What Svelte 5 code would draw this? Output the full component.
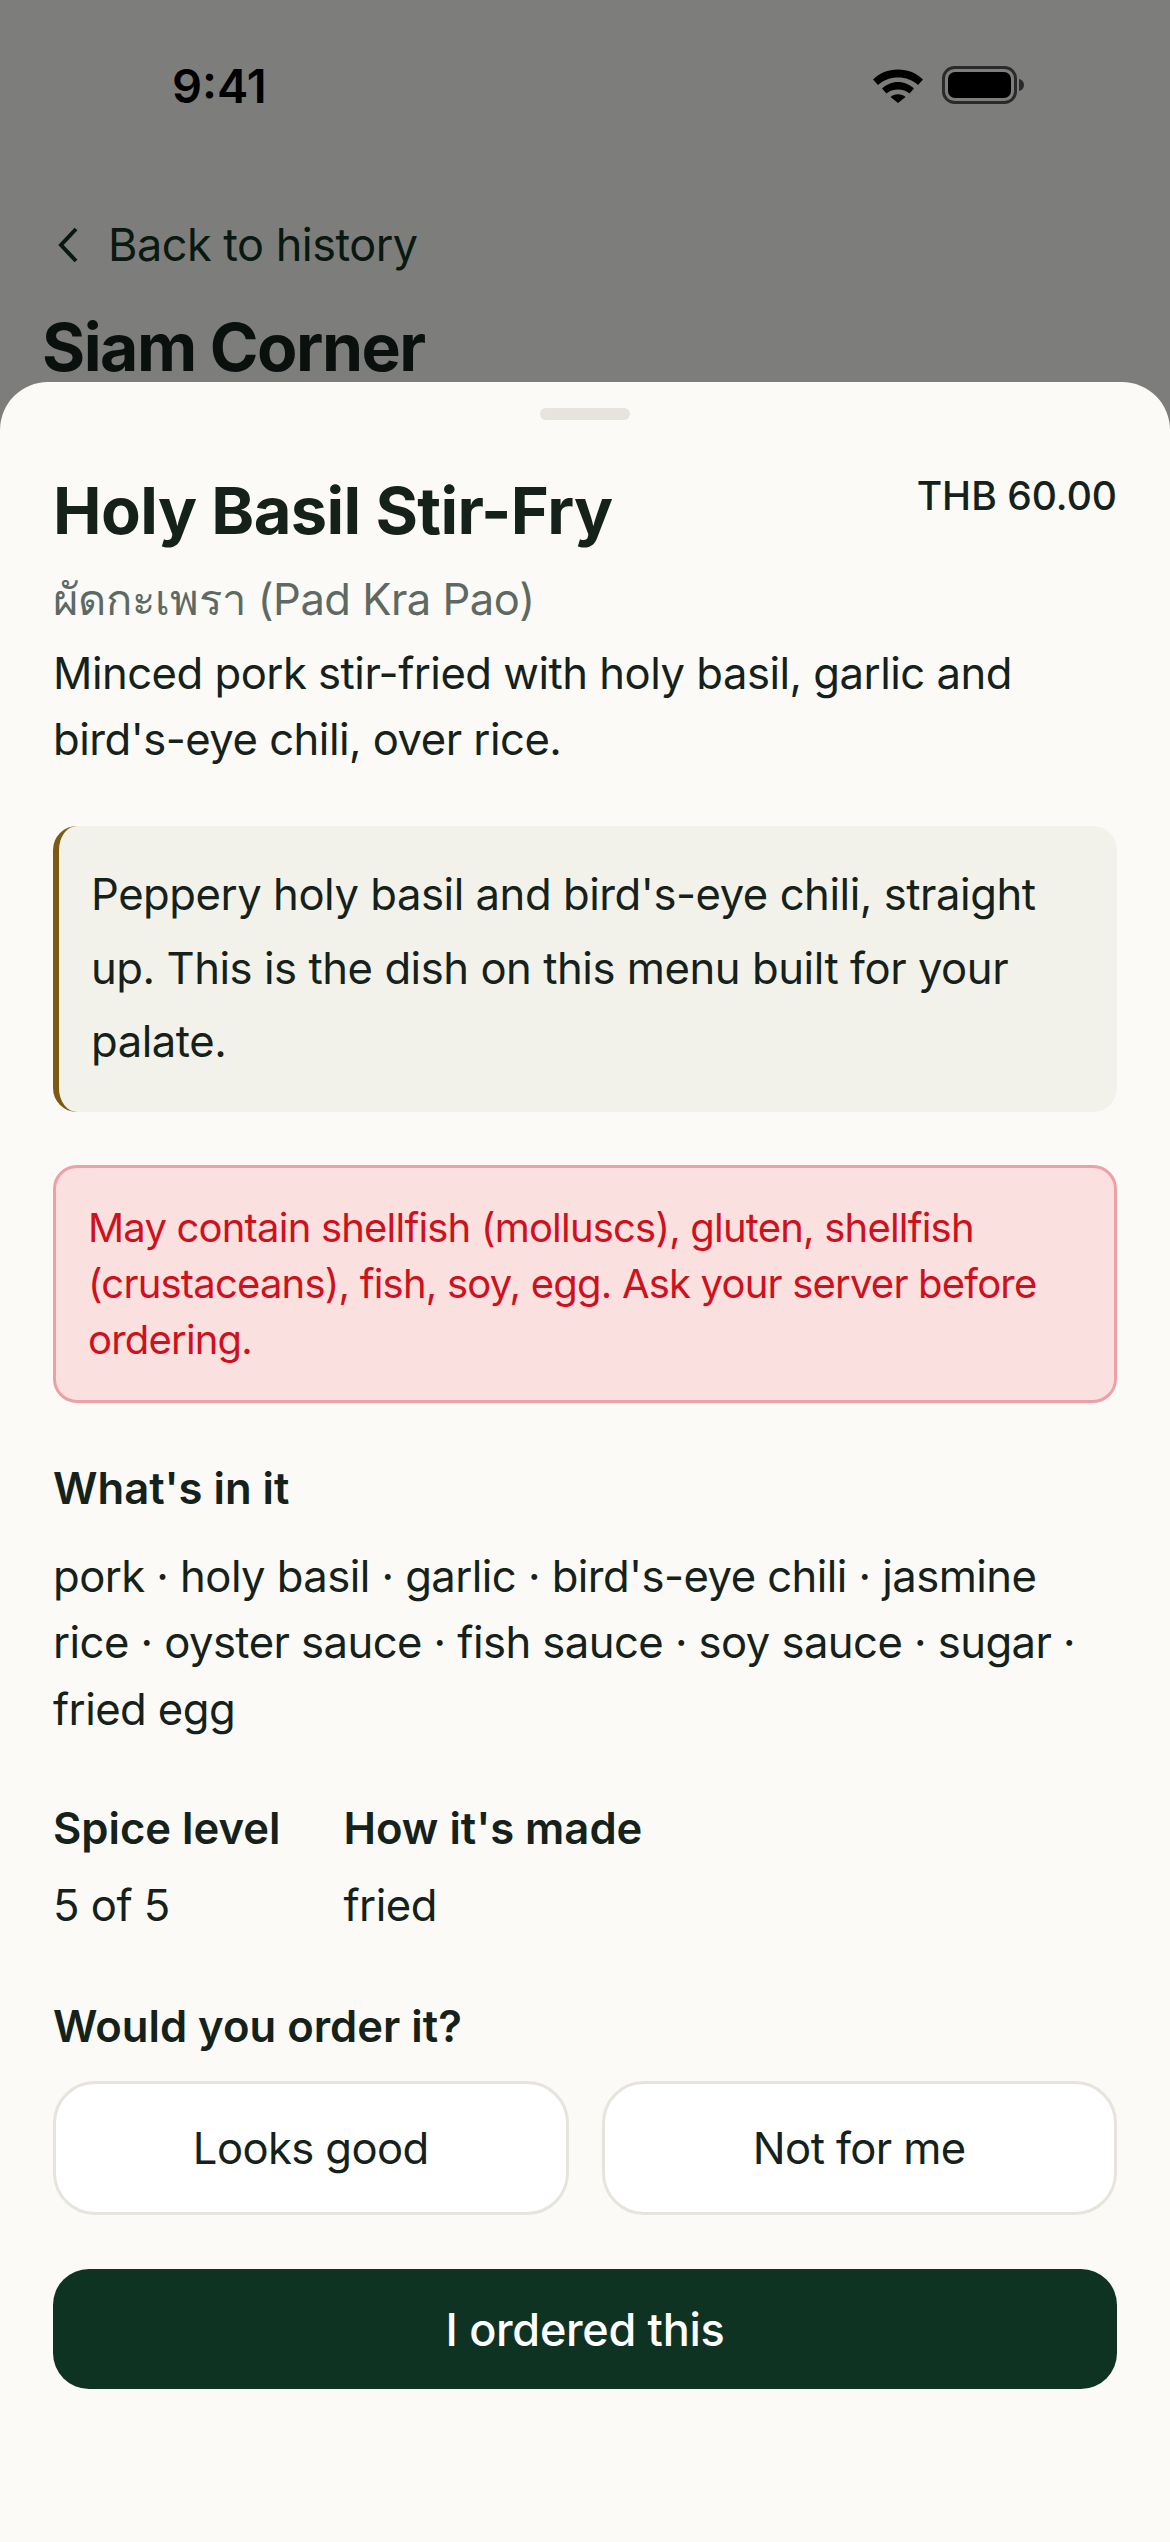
<script>
  const facts = [
    { label: 'Spice level', value: '5 of 5' },
    { label: "How it's made", value: 'fried' }
  ];
</script>

<div class="screen">
  <div class="page">
    <div class="status">
      <span class="time">9:41</span>
      <div class="status-icons">
        <svg class="wifi" width="52" height="36" viewBox="0 0 52 36" aria-hidden="true">
          <path d="M1 12.500C7.500 6 16 2.500 26 2.500S44.500 6 51 12.500L46 18C40.500 13 34 10.500 26 10.500S11.500 13 6 18Z" fill="#000"/>
          <path d="M10 21.500C14.500 17.500 20 15 26 15S37.500 17.500 42 21.500L37.500 26.500C34.500 24 30.500 22.500 26 22.500S17.500 24 14.500 26.500Z" fill="#000"/>
          <path d="M18.500 30C20.500 28.300 23 27.300 26 27.300S31.500 28.300 33.500 30L26 36Z" fill="#000"/>
        </svg>
        <svg class="battery" width="84" height="38" viewBox="0 0 84 38" aria-hidden="true">
          <rect x="1.500" y="1.500" width="72" height="35" rx="11" fill="none" stroke="#555" stroke-width="3"/>
          <rect x="6" y="6" width="63" height="26" rx="7" fill="#000"/>
          <path d="M77 13c3.500 .8 5 3 5 6s-1.500 5.200-5 6Z" fill="#555"/>
        </svg>
      </div>
    </div>
    <a class="back" href="#history">
      <svg width="24" height="38" viewBox="0 0 24 38" aria-hidden="true">
        <path d="M20 3 5 19l15 16" fill="none" stroke="#0f3323" stroke-width="4"/>
      </svg>
      <span>Back to history</span>
    </a>
    <h2 class="venue">Siam Corner</h2>
  </div>

  <div class="scrim"></div>

  <section class="sheet">
    <div class="handle"></div>

    <header class="head">
      <h1>Holy Basil Stir-Fry</h1>
      <span class="price">THB 60.00</span>
    </header>
    <p class="native"><span class="thai">ผัดกะเพรา</span> (Pad Kra Pao)</p>
    <p class="desc">Minced pork stir-fried with holy basil, garlic and bird's-eye chili, over rice.</p>

    <div class="note">Peppery holy basil and bird's-eye chili, straight up. This is the dish on this menu built for your palate.</div>

    <div class="allergen">May contain shellfish (molluscs), gluten, shellfish (crustaceans), fish, soy, egg. Ask your server before ordering.</div>

    <h3 class="label in-it">What's in it</h3>
    <p class="ingredients">pork · holy basil · garlic · bird's-eye chili · jasmine rice · oyster sauce · fish sauce · soy sauce · sugar · fried egg</p>

    <div class="facts">
      {#each facts as fact}
        <div class="fact">
          <h3 class="label">{fact.label}</h3>
          <p>{fact.value}</p>
        </div>
      {/each}
    </div>

    <h3 class="label order">Would you order it?</h3>
    <div class="choices">
      <button type="button" class="choice">Looks good</button>
      <button type="button" class="choice">Not for me</button>
    </div>
    <button type="button" class="primary">I ordered this</button>
  </section>
</div>

<style>
  :global(body) {
    margin: 0;
    background: #fbfaf6;
  }

  * {
    box-sizing: border-box;
  }

  .screen {
    position: relative;
    width: 1170px;
    height: 2542px;
    overflow: hidden;
    font-family: Inter, "Noto Sans", "Liberation Sans", sans-serif;
    color: #15211b;
    background: #fbfaf6;
  }

  .page {
    padding: 0 42px;
  }

  .status {
    display: flex;
    align-items: center;
    justify-content: space-between;
    height: 170px;
    padding-left: 130px;
  }

  .time {
    font-size: 47px;
    font-weight: 600;
    color: #000;
  }

  .status-icons {
    display: flex;
    align-items: center;
    gap: 18px;
    margin-right: 102px;
  }

  .back {
    display: flex;
    align-items: center;
    gap: 28px;
    margin: 47px 0 0 14px;
    font-size: 45px;
    letter-spacing: -0.5px;
    color: #0f3323;
    text-decoration: none;
  }

  .venue {
    margin: 35px 0 0;
    font-size: 66px;
    font-weight: 700;
    letter-spacing: -1.5px;
  }

  .scrim {
    position: absolute;
    inset: 0;
    background: rgba(0, 0, 0, 0.5);
  }

  .sheet {
    position: absolute;
    left: 0;
    right: 0;
    bottom: 0;
    height: 2160px;
    padding: 26px 53px 0;
    background: #fbfaf6;
    border-radius: 48px 48px 0 0;
  }

  .handle {
    width: 90px;
    height: 12px;
    margin: 0 auto;
    border-radius: 6px;
    background: #e6e4dc;
  }

  .head {
    display: flex;
    align-items: flex-start;
    justify-content: space-between;
    margin-top: 51px;
  }

  h1 {
    margin: 0;
    font-size: 65px;
    line-height: 80px;
    font-weight: 700;
    letter-spacing: -0.6px;
  }

  .price {
    margin-top: -3px;
    font-size: 39px;
    line-height: 56px;
    font-weight: 500;
  }

  p {
    margin: 0;
  }

  .native {
    margin-top: 15px;
    font-size: 43.500px;
    line-height: 66px;
    letter-spacing: -0.5px;
    color: #5d6a63;
  }

  .thai {
    font-size: 43.500px;
    letter-spacing: 0;
  }

  .desc {
    margin-top: 9px;
    font-size: 43.6px;
    line-height: 66px;
    letter-spacing: -0.5px;
  }

  .note {
    margin-top: 53px;
    padding: 32px 32px 33px 32px;
    font-size: 43.6px;
    line-height: 73.500px;
    letter-spacing: -0.45px;
    background: #f3f2ea;
    border-left: 6px solid #7d5a14;
    border-radius: 24px;
  }

  .allergen {
    margin-top: 53px;
    padding: 32px;
    font-size: 40px;
    line-height: 56px;
    letter-spacing: -0.8px;
    color: #d0101c;
    background: #fae1df;
    border: 3px solid #eda0a6;
    border-radius: 24px;
  }

  .label {
    margin: 0;
    font-size: 43.6px;
    line-height: 60px;
    font-weight: 600;
  }

  .in-it {
    margin-top: 56px;
  }

  .ingredients {
    margin-top: 25px;
    font-size: 43.6px;
    line-height: 66.500px;
    letter-spacing: -0.55px;
  }

  .facts {
    display: flex;
    gap: 63px;
    margin-top: 56px;
  }

  .fact p {
    margin-top: 14px;
    font-size: 43.6px;
    line-height: 66px;
    letter-spacing: -0.5px;
  }

  .order {
    margin-top: 58px;
  }

  .choices {
    display: flex;
    gap: 33px;
    margin-top: 24px;
  }

  button {
    font-family: inherit;
    border: 0;
    cursor: pointer;
  }

  .choice {
    flex: 1;
    height: 134px;
    font-size: 43.6px;
    letter-spacing: -0.6px;
    color: #15211b;
    background: #fff;
    border: 3px solid #e6e4dc;
    border-radius: 42px;
  }

  .primary {
    display: block;
    width: 100%;
    height: 120px;
    margin-top: 54px;
    font-size: 45px;
    font-weight: 500;
    letter-spacing: -0.3px;
    color: #fff;
    background: #0f3323;
    border-radius: 36px;
  }
</style>
